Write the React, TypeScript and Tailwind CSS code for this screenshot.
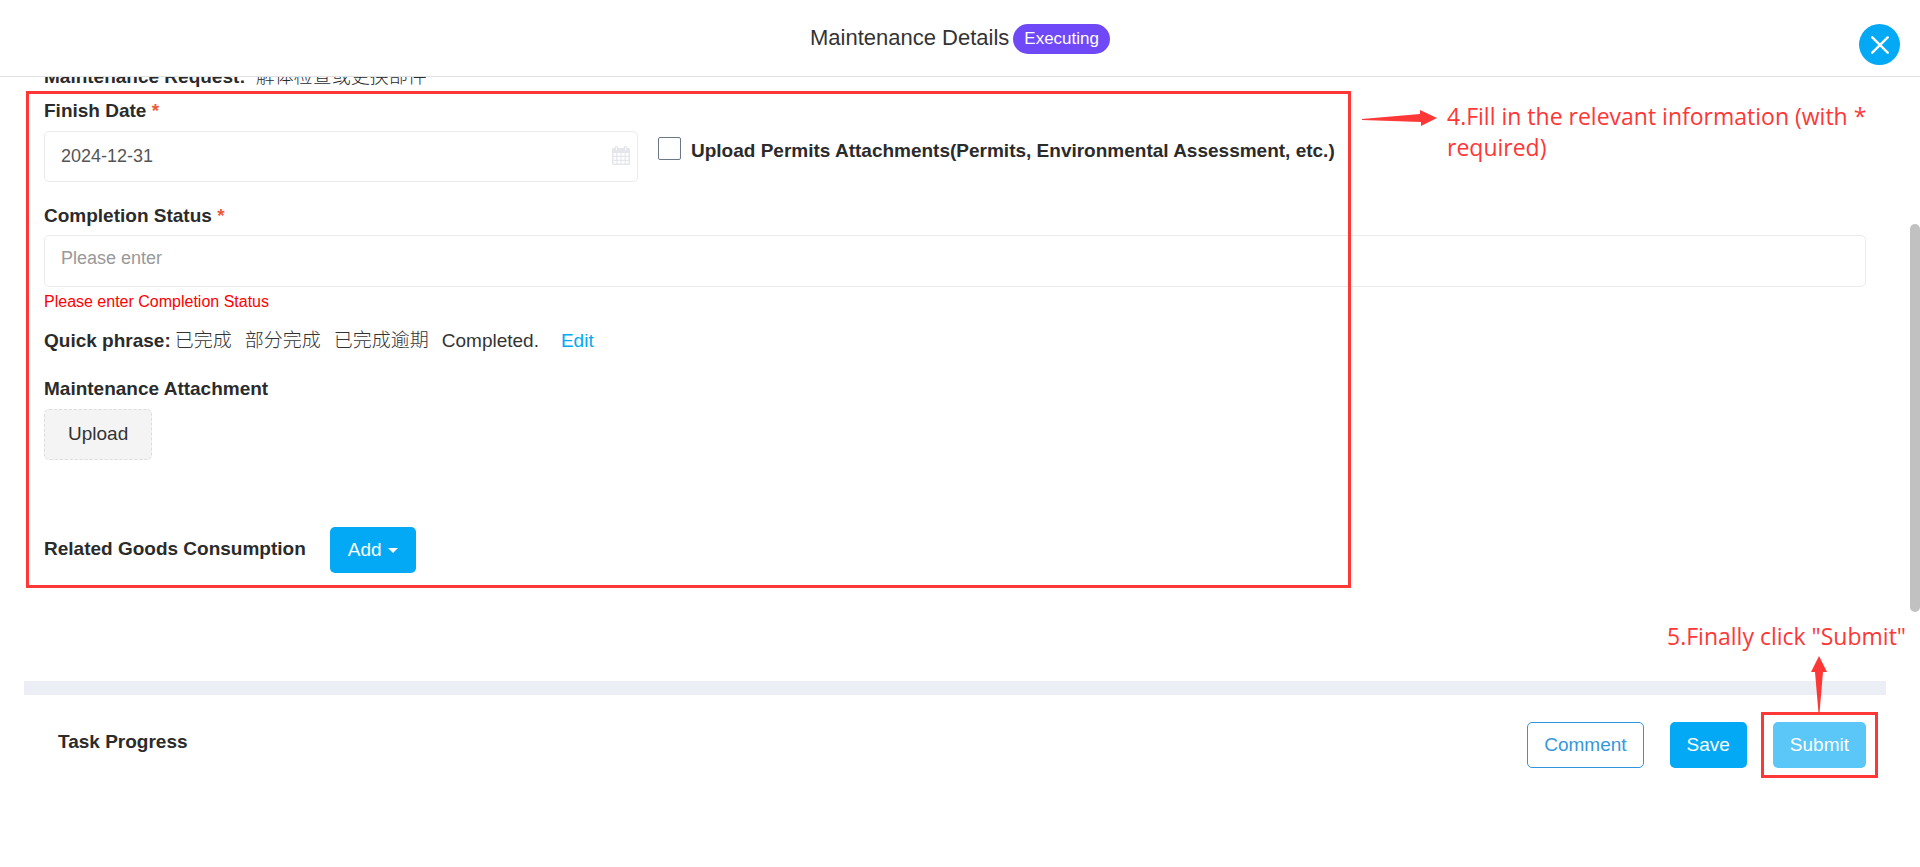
import { useState } from "react";

const phrases = ["已完成", "部分完成", "已完成逾期", "Completed."];

function CalendarIcon() {
  return (
    <svg viewBox="0 0 18 19" className="h-[19px] w-[18px]" aria-hidden="true">
      <path
        fill="#e4e6ea"
        fillRule="evenodd"
        d="M1.5 2H2.8V1.5a1.5 1.5 0 0 1 1.5-1.5h.5a1.5 1.5 0 0 1 1.5 1.5V2h5.4v-.5a1.5 1.5 0 0 1 1.5-1.5h.5a1.5 1.5 0 0 1 1.5 1.5V2h1.3A1.5 1.5 0 0 1 18 3.500V17.500a1.500 1.500 0 0 1-1.500 1.500h-15A1.500 1.500 0 0 1 0 17.500V3.500A1.500 1.500 0 0 1 1.500 2zM4.200 1.300v3h.8v-3zM13 1.300v3h.8v-3zM1.500 7v2.800h2.800V7zM5.500 7v2.800h3V7zM9.600 7v2.800h3V7zM13.700 7v2.800h2.800V7zM1.500 10.900v2.900h2.800v-2.900zM5.500 10.900v2.900h3v-2.900zM9.600 10.900v2.900h3v-2.900zM13.700 10.900v2.900h2.800v-2.900zM1.500 14.900v2.600h2.800v-2.600zM5.500 14.900v2.600h3v-2.600zM9.600 14.900v2.600h3v-2.600zM13.700 14.900v2.600h2.800v-2.600z"
      />
    </svg>
  );
}

function Required() {
  return <span className="text-[#ec5b3a]">*</span>;
}

function Header() {
  return (
    <header className="relative z-10 flex h-[77px] shrink-0 items-center justify-center gap-1 border-b border-[#e2e2e2] bg-white">
      <h1 className="text-[22px] leading-8 text-[#333]">Maintenance Details</h1>
      <span className="mt-0.5 rounded-full bg-[#6f48f8] px-[11px] text-[17px] leading-[30px] text-white">Executing</span>
      <button
        aria-label="Close"
        className="absolute top-6 right-5 flex h-[41px] w-[41px] items-center justify-center rounded-full bg-[#03a9f4]"
      >
        <svg viewBox="0 0 18 18" className="h-[18px] w-[18px]" stroke="#fff" strokeWidth="2.400" strokeLinecap="round">
          <path d="M1.300 1.300l15.400 15.400M16.700 1.300L1.300 16.700" />
        </svg>
      </button>
    </header>
  );
}

export default function App() {
  const [date, setDate] = useState("2024-12-31");
  const [status, setStatus] = useState("");

  return (
    <div className="relative flex h-screen flex-col overflow-hidden bg-white font-['Liberation_Sans','Noto_Sans_CJK_SC',sans-serif] text-[19px] leading-7 text-[#2b2b2b]">
      <Header />
      <main className="relative flex-1">
        <form className="pr-[54px] pl-11" onSubmit={(e) => e.preventDefault()}>
          <p className="-mt-3.5">
            <b>Maintenance Request:</b>
            <span className="ml-2.5 font-light">解体检查或更换部件</span>
          </p>

          <div className="mt-1.5 grid grid-cols-3 gap-x-5">
            <div>
              <label htmlFor="finish" className="font-bold">
                Finish Date <Required />
              </label>
              <div className="relative mt-1.5">
                <input
                  id="finish"
                  value={date}
                  onChange={(e) => setDate(e.target.value)}
                  className="block h-[51px] w-full rounded-[5px] border border-[#ebebeb] px-4 text-[18px] text-[#555]"
                />
                <span className="absolute top-[15px] right-2">
                  <CalendarIcon />
                </span>
              </div>
            </div>
            <div className="col-span-2 flex items-start pt-10">
              <input
                id="permits"
                type="checkbox"
                className="h-[23px] w-[23px] shrink-0 appearance-none rounded-[2px] border border-[#6b7785] bg-white checked:bg-[#03a9f4]"
              />
              <label htmlFor="permits" className="ml-2.5 font-bold">
                Upload Permits Attachments(Permits, Environmental Assessment, etc.)
              </label>
            </div>
          </div>

          <div className="mt-5">
            <label htmlFor="status" className="font-bold">
              Completion Status <Required />
            </label>
            <input
              id="status"
              value={status}
              onChange={(e) => setStatus(e.target.value)}
              placeholder="Please enter"
              className="mt-[5px] block h-[52px] w-full rounded-[5px] border border-[#ebebeb] px-4 pb-1.5 text-[18px] placeholder:text-[#999]"
            />
            <p className="mt-[3px] text-[16px] leading-6 text-[#ff0000]">Please enter Completion Status</p>
          </div>

          <div className="mt-[13px] flex items-center">
            <b>Quick phrase:</b>
            <div className="ml-1 flex gap-[13px] font-light text-[#333]">
              {phrases.map((phrase) => (
                <button key={phrase} type="button" onClick={() => setStatus(phrase)}>
                  {phrase}
                </button>
              ))}
            </div>
            <a href="#edit" className="ml-[22px] text-[#03a9f4]">
              Edit
            </a>
          </div>

          <h2 className="mt-5 font-bold">Maintenance Attachment</h2>
          <button
            type="button"
            className="mt-1.5 block h-[51px] rounded-[5px] border border-dashed border-[#ddd] bg-[#f4f4f4] px-[23px] pb-0.5 text-[#333]"
          >
            Upload
          </button>

          <div className="mt-[67px] flex items-center gap-6">
            <h2 className="pb-0.5 font-bold">Related Goods Consumption</h2>
            <button type="button" className="flex h-[46px] items-center gap-1.5 rounded-[5px] bg-[#03a9f4] px-[18px] text-white">
              Add
              <span className="border-x-[5px] border-t-[5px] border-x-transparent border-t-white" />
            </button>
          </div>
        </form>

        {/* callout around the fields to fill in */}
        <div className="pointer-events-none absolute top-3.5 left-[26px] h-[497px] w-[1325px] border-[3px] border-[#fe3737]" />
        <div className="absolute top-6 left-[1362px] flex w-[510px] items-start gap-2.5 font-['Open_Sans',sans-serif] text-[23px] leading-[31px] text-[#fe3737]">
          <svg viewBox="0 0 75 16" className="mt-[9px] h-4 w-[75px] shrink-0" fill="#fe3737">
            <path d="M0 9L58 4V0L75 8 59 16V12L0 10z" />
          </svg>
          <p>4.Fill in the relevant information (with * required)</p>
        </div>

        <section className="mt-[108px]">
          <hr className="mr-[34px] ml-6 h-3.5 border-0 bg-[#ebeff5]" />
          <div className="mt-[27px] flex items-center pr-[54px] pl-[58px]">
            <h2 className="mr-auto pb-1.5 font-bold">Task Progress</h2>
            <button className="h-[46px] rounded-[5px] border border-[#2f95de] px-4 text-[#3598dc]">Comment</button>
            <button className="ml-[26px] h-[46px] rounded-[5px] bg-[#03a9f4] px-[17px] text-white">Save</button>
            <div className="relative ml-[26px]">
              <button className="h-[46px] rounded-[5px] bg-[#5bc6f8] px-[17px] text-white">Submit</button>
              <div className="pointer-events-none absolute -inset-x-3 -inset-y-2.5 border-[3px] border-[#fe3737]" />
              <div className="absolute -right-10 bottom-[55px] flex flex-col items-end font-['Open_Sans',sans-serif] text-[23px] leading-[31px] whitespace-nowrap text-[#fe3737]">
                <p>5.Finally click "Submit"</p>
                <svg viewBox="0 0 16 57" className="mt-1 mr-[79px] h-[57px] w-4" fill="#fe3737">
                  <path d="M8 0l8 16h-4L8.500 57h-1L4 16H0z" />
                </svg>
              </div>
            </div>
          </div>
        </section>
      </main>
      <div className="absolute top-56 right-0 h-[388px] w-2.5 rounded-full bg-[#c1c1c1]" />
    </div>
  );
}
